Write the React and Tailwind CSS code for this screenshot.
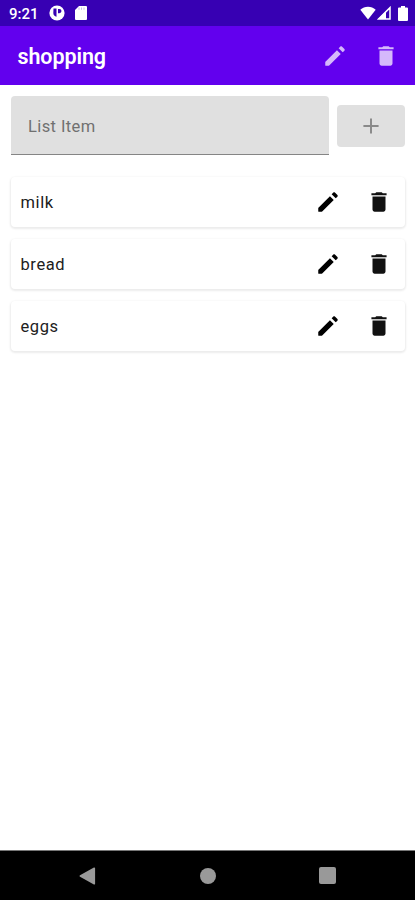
import { useState } from "react";

function EditIcon({ className }) {
  return (
    <svg viewBox="0 0 24 24" fill="currentColor" className={className}>
      <path d="M3 17.7v2.8c0 .28.22.5.5.5h2.8c.13 0 .26-.05.35-.15L17.3 10.2l-3.5-3.5L3.15 17.35c-.1.1-.15.22-.15.35zM20.71 7.04c.39-.39.39-1.02 0-1.41l-2.34-2.34c-.39-.39-1.02-.39-1.41 0l-1.6 1.6 3.75 3.75 1.6-1.6z" />
    </svg>
  );
}

function DeleteIcon({ className }) {
  return (
    <svg viewBox="0 0 24 24" fill="currentColor" className={className}>
      <path d="M6 19c0 1.1.9 2 2 2h8c1.1 0 2-.9 2-2V7H6v12zM19 4h-3.5l-1-1h-5l-1 1H5v1.7h14V4z" />
    </svg>
  );
}

function StatusBar() {
  return (
    <div className="flex h-[26px] items-center bg-[#3700b3] pl-[9px] pr-[7px] text-white">
      <span className="w-[40px] pt-[2px] text-[15px] font-medium leading-none">9:21</span>
      <svg viewBox="0 0 16 16" className="h-4 w-4">
        <circle cx="8" cy="8" r="7.6" fill="white" />
        <path d="M4.5 3.5h3v8.3C5.8 11.4 4.3 10 4.3 8zM9 4h1.4a2.1 2.1 0 0 1 0 4.2H9z" fill="#3700b3" />
      </svg>
      <svg viewBox="0 0 12 14" className="ml-[10px] h-[14px] w-3">
        <path d="M4 0h7a1 1 0 0 1 1 1v12a1 1 0 0 1-1 1H1a1 1 0 0 1-1-1V4z" fill="white" />
        <path d="M4 1.5v2.3M6.5 1.5v2.3M9 1.5v2.3" stroke="#c9b8ea" strokeWidth="1" />
      </svg>
      {/* wifi, signal, battery */}
      <svg viewBox="0 0 16 14" className="ml-auto h-[14px] w-4">
        <path d="M8 13.5.3 3.8C2.5 1.8 5 .7 8 .7s5.5 1.1 7.7 3.1z" fill="white" />
      </svg>
      <svg viewBox="0 0 14 14" className="ml-[1px] h-[14px] w-[14px]">
        <path d="M13 1.6V13H1.6z" fill="none" stroke="white" strokeWidth="1.5" />
        <path d="M9 5.5V13H1z" fill="white" />
      </svg>
      <svg viewBox="0 0 10 15" className="ml-[7px] h-[15px] w-[10px]">
        <path d="M3 0h4v1.5h2a1 1 0 0 1 1 1V14a1 1 0 0 1-1 1H1a1 1 0 0 1-1-1V2.5a1 1 0 0 1 1-1h2z" fill="white" />
      </svg>
    </div>
  );
}

function ListRow({ name, onDelete }) {
  return (
    <li className="flex h-[50px] items-center rounded-[4px] bg-white pl-[9.5px] pr-[13px] shadow-[0_1px_2px_1px_rgba(0,0,0,0.08)]">
      <span className="flex-1 pt-[3px] text-[16.5px] tracking-[0.6px] text-[#202020]">{name}</span>
      <button type="button" aria-label="Edit">
        <EditIcon className="h-[26px] w-[26px] text-black" />
      </button>
      <button type="button" aria-label="Delete" className="ml-[25px]" onClick={onDelete}>
        <DeleteIcon className="h-[26px] w-[26px] text-[#111111]" />
      </button>
    </li>
  );
}

export default function App() {
  const [items, setItems] = useState(["milk", "bread", "eggs"]);
  const [text, setText] = useState("");

  function handleAdd(e) {
    e.preventDefault();
    if (!text.trim()) return;
    setItems([...items, text.trim()]);
    setText("");
  }

  return (
    <div className="flex h-[900px] w-[415px] flex-col bg-white font-['Roboto',sans-serif]">
      <StatusBar />
      <header className="flex h-[59px] items-center bg-[#6200ee] pl-[17.5px] pr-[16px]">
        <h1 className="flex-1 pt-[4px] text-[21.5px] font-semibold tracking-[-0.1px] text-white">shopping</h1>
        <button type="button" aria-label="Edit list">
          <EditIcon className="h-[26px] w-[26px] text-[#d5b8fb]" />
        </button>
        <button type="button" aria-label="Delete list" className="ml-[25px]">
          <DeleteIcon className="h-[26px] w-[26px] text-[#d5b8fb]" />
        </button>
      </header>

      <main className="flex-1 pl-[11px] pr-[10px] pt-[11px]">
        <form onSubmit={handleAdd} className="flex items-center gap-[8px]">
          <input
            value={text}
            onChange={(e) => setText(e.target.value)}
            placeholder="List Item"
            className="h-[59px] w-[318px] rounded-t-[4px] border-b border-[#858585] bg-[#e0e0e0] px-[17px] pt-[3px] text-[16.5px] tracking-[0.4px] text-black outline-none placeholder:text-[#707070]"
          />
          <button
            type="submit"
            aria-label="Add"
            className="flex h-[42px] flex-1 items-center justify-center rounded-[4px] bg-[#e0e0e0]"
          >
            <svg viewBox="0 0 24 24" fill="#898989" className="h-[26px] w-[26px]">
              <path d="M19 12.9h-6.1V19h-1.8v-6.1H5v-1.8h6.1V5h1.8v6.1H19z" />
            </svg>
          </button>
        </form>

        <ul className="mt-[22px] flex flex-col gap-[12px]">
          {items.map((item, i) => (
            <ListRow key={item} name={item} onDelete={() => setItems(items.filter((_, n) => n !== i))} />
          ))}
        </ul>
      </main>

      {/* Android navigation buttons */}
      <nav className="flex h-[50px] items-center border-t border-[#777777] bg-black pl-[79px] pr-[79px] text-[#999999]">
        <svg viewBox="0 0 17 18" fill="currentColor" className="h-[18px] w-[17px]">
          <path d="M15.3.5a.8.8 0 0 1 .8.8v15.4a.8.8 0 0 1-1.2.7L1 9.7a.8.8 0 0 1 0-1.4L14.9.6z" />
        </svg>
        <span className="ml-[104px] h-4 w-4 rounded-full bg-[#999999]" />
        <span className="ml-auto h-[17px] w-[17px] rounded-[2px] bg-[#999999]" />
      </nav>
    </div>
  );
}
